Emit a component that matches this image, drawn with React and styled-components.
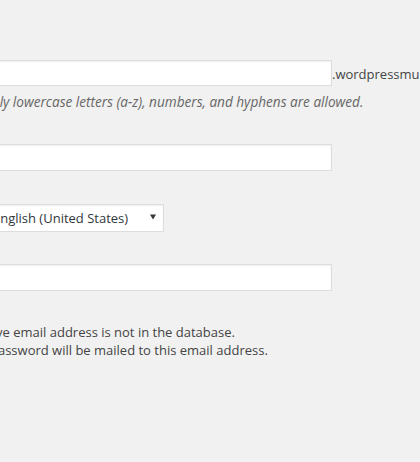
import React from "react";
import styled, { createGlobalStyle } from "styled-components";

const Global = createGlobalStyle`
  html, body { margin: 0; padding: 0; background: #f1f1f1; overflow: hidden; }
  body { font-family: "Open Sans", "Noto Sans", sans-serif; font-size: 13px; color: #444; }
`;

const Page = styled.div`
  width: 420px;
  height: 462px;
  overflow: hidden;
  background: #f1f1f1;
`;

const Form = styled.div`
  margin-left: -228px;
  padding-top: 60px;
  display: grid;
  grid-template-columns: 210px auto;
  white-space: nowrap;
`;

const Label = styled.div`
  font-weight: 600;
  color: #23282d;
`;

const Field = styled.div`
  display: flex;
  flex-direction: column;
  align-items: flex-start;
  margin-bottom: ${(p) => p.$gap || 0}px;
`;

const InputLine = styled.div`
  display: flex;
  align-items: center;
  height: 26px;
`;

const TextInput = styled.input`
  box-sizing: border-box;
  width: 350px;
  height: ${(p) => p.$h || 26}px;
  margin: 0;
  border: 1px solid #ddd;
  box-shadow: inset 0 1px 2px rgba(0, 0, 0, 0.07);
  background: #fff;
  font: inherit;
  outline: none;
`;

const Suffix = styled.span`
  font-size: 13px;
  color: #444;
  margin-top: 1px;
`;

const Description = styled.p`
  margin: 7px 0 0;
  font-style: italic;
  color: #666;
  font-size: 13.6px;
  line-height: 18px;
`;

const SelectWrap = styled.div`
  position: relative;
  width: 182px;
  height: 28px;
`;

const Select = styled.select`
  appearance: none;
  -webkit-appearance: none;
  box-sizing: border-box;
  width: 100%;
  height: 28px;
  margin: 0;
  padding: 0 24px 0 10px;
  border: 1px solid #ddd;
  box-shadow: inset 0 1px 2px rgba(0, 0, 0, 0.07);
  background: #fff;
  color: #32373c;
  font: inherit;
  font-size: 13px;
  outline: none;
`;

const Arrow = styled.svg`
  position: absolute;
  right: 8px;
  top: 10px;
  width: 6px;
  height: 6px;
  pointer-events: none;
`;

const Note = styled.div`
  grid-column: 1 / span 2;
  padding-left: 5px;
  font-size: 13px;
  line-height: 18px;
  color: #444;
`;

export default function App() {
  return (
    <Page>
      <Global />
      <Form>
        <Label />
        <Field $gap={33}>
          <InputLine>
            <TextInput type="text" aria-label="Site Address" />
            <Suffix>.wordpressmu.dev</Suffix>
          </InputLine>
          <Description>
            Only lowercase letters (a-z), numbers, and hyphens are allowed.
          </Description>
        </Field>

        <Label />
        <Field $gap={33}>
          <TextInput type="text" aria-label="Site Title" $h={27} />
        </Field>

        <Label />
        <Field $gap={32}>
          <SelectWrap>
            <Select aria-label="Site Language" defaultValue="en_US">
              <option value="en_US">English (United States)</option>
            </Select>
            <Arrow viewBox="0 0 6 6">
              <path d="M0 0.5 H6 L3 5.5 Z" fill="#32373c" />
            </Arrow>
          </SelectWrap>
        </Field>

        <Label />
        <Field $gap={32}>
          <TextInput type="email" aria-label="Admin Email" $h={27} />
        </Field>

        <Note>
          A new user will be created if the above email address is not in the database.
          <br />
          The username and a link to set the password will be mailed to this email address.
        </Note>
      </Form>
    </Page>
  );
}
